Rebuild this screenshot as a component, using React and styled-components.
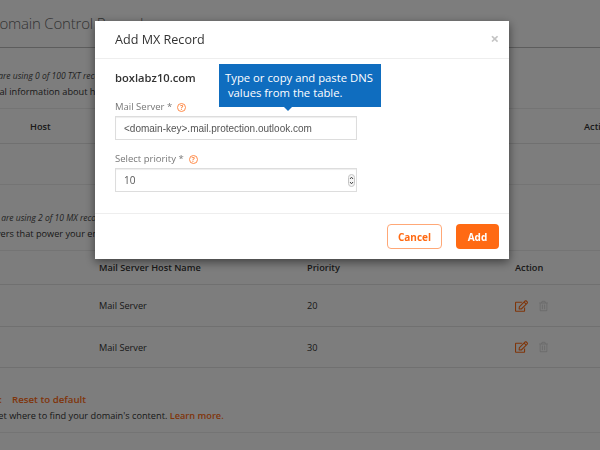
import React from 'react';
import styled, { createGlobalStyle } from 'styled-components';
import { FaRegEdit, FaRegTrashAlt } from 'react-icons/fa';

const GlobalStyle = createGlobalStyle`
  html, body {
    margin: 0;
    padding: 0;
    height: 100%;
    overflow: hidden;
    background: #fbfbfb;
    font-family: "Open Sans", "Noto Sans", sans-serif;
    color: #333;
  }
`;

const mxRows = [
    { host: 'Mail Server', priority: 20 },
    { host: 'Mail Server', priority: 30 },
];

const HelpIcon = () => <HelpMark>?</HelpMark>;

const App = () => {
    return (
        <>
            <GlobalStyle />
            <Page>
                <PageTitle>Domain Control Records</PageTitle>
                <Note $top={20}>You are using 0 of 100 TXT records</Note>
                <Info $shift={-9}>General information about how to use them</Info>
                <HeaderRow $height={34}>
                    <HostCell>Host</HostCell>
                    <ActionHead>Action</ActionHead>
                </HeaderRow>
                <EmptyRow />
                <Note $top={25} $shift={3}>You are using 2 of 10 MX records</Note>
                <Info>Servers that power your email</Info>
                <HeaderRow $height={33}>
                    <MxHost>Mail Server Host Name</MxHost>
                    <MxPriority>Priority</MxPriority>
                    <MxAction>Action</MxAction>
                </HeaderRow>
                {mxRows.map(row => (
                    <BodyRow key={row.priority}>
                        <MxHost>{row.host}</MxHost>
                        <MxPriority>{row.priority}</MxPriority>
                        <MxAction>
                            <EditIcon />
                            <TrashIcon />
                        </MxAction>
                    </BodyRow>
                ))}
                <ResetLine>
                    <ResetLabel>NS:</ResetLabel>
                    <ResetLink>Reset to default</ResetLink>
                </ResetLine>
                <Info $shift={-103}>
                    Name servers tell the internet where to find your domain's content. <LearnMore>Learn more.</LearnMore>
                </Info>
                <LastHeader>
                    <TypeCell>Type</TypeCell>
                    <ValueCell>Name</ValueCell>
                </LastHeader>
            </Page>
            <Overlay>
                <Modal>
                    <ModalHeader>
                        <ModalTitle>Add MX Record</ModalTitle>
                        <CloseButton>×</CloseButton>
                    </ModalHeader>
                    <ModalBody>
                        <DomainName>boxlabz10.com</DomainName>
                        <FieldLabel $top={15} $bottom={3}>Mail Server *<HelpIcon /></FieldLabel>
                        <TextInput readOnly value="<domain-key>.mail.protection.outlook.com" />
                        <FieldLabel $top={13} $bottom={3}>Select priority *<HelpIcon /></FieldLabel>
                        <NumberWrap>
                            <NumberValue>10</NumberValue>
                            <Spinner>
                                <svg width="7" height="13" viewBox="0 0 7 13">
                                    <rect x="0.5" y="0.5" width="6" height="12" rx="3" fill="#f4f4f4" stroke="#c4c4c4" />
                                    <path d="M2 5 L3.5 3.2 L5 5 M2 8 L3.5 9.8 L5 8" fill="none" stroke="#444" strokeWidth="1" />
                                </svg>
                            </Spinner>
                        </NumberWrap>
                        <Tooltip>
                            Type or copy and paste DNS<br />&nbsp;values from the table.
                        </Tooltip>
                    </ModalBody>
                    <ModalFooter>
                        <CancelButton>Cancel</CancelButton>
                        <AddButton>Add</AddButton>
                    </ModalFooter>
                </Modal>
            </Overlay>
        </>
    );
};

export default App;

const Page = styled.div`
  width: 618px;
  height: 450px;
  overflow: hidden;
  margin-left: -18px;
  font-size: 9.2px;
`;

const PageTitle = styled.h1`
  margin: 0 0 0 7px;
  height: 48px;
  padding-top: 13px;
  box-sizing: border-box;
  border-bottom: 1px solid #bbb;
  font-size: 15px;
  line-height: 20px;
  letter-spacing: -0.2px;
  font-weight: 300;
  color: #666;
  white-space: nowrap;
`;

const Note = styled.div`
  margin-top: ${p => p.$top}px;
  margin-left: ${p => p.$shift ?? 0}px;
  font-size: 8.5px;
  line-height: 16px;
  font-style: italic;
  color: #444;
`;

const Info = styled.div`
  margin-left: ${p => p.$shift ?? 0}px;
  font-size: 9.2px;
  line-height: 16px;
  color: #333;
  white-space: nowrap;
`;

const HeaderRow = styled.div`
  margin-top: 8px;
  height: ${p => p.$height}px;
  display: flex;
  align-items: center;
  border-top: 1px solid #e8e8e8;
  border-bottom: 1px solid #e0e0e0;
  font-weight: 600;
`;

const HostCell = styled.div`
  flex: none;
  margin-left: 48px;
  width: 554px;
`;

const ActionHead = styled.div`
  width: 40px;
  flex: none;
`;

const EmptyRow = styled.div`
  height: 40px;
  border-bottom: 1px solid #e8e8e8;
`;

const BodyRow = styled.div`
  height: 39.5px;
  padding-top: 1px;
  display: flex;
  align-items: center;
  border-bottom: 1px solid #e0e0e0;
`;

const MxHost = styled.div`
  margin-left: 117px;
  width: 208px;
`;

const MxPriority = styled.div`
  width: 208px;
`;

const MxAction = styled.div`
  display: flex;
  align-items: center;
  gap: 11px;
`;

const EditIcon = styled(FaRegEdit)`
  width: 13px;
  height: 12px;
  color: #ff6a13;
`;

const TrashIcon = styled(FaRegTrashAlt)`
  width: 9px;
  height: 12px;
  color: #d8d8d8;
`;

const ResetLine = styled.div`
  margin-top: 24px;
  display: flex;
  gap: 10px;
  font-size: 9.7px;
  line-height: 16px;
`;

const ResetLabel = styled.span`
  width: 20px;
  text-align: right;
  font-weight: 600;
  color: #ff6a13;
`;

const ResetLink = styled.span`
  color: #ff6a13;
  font-weight: 600;
`;

const LearnMore = styled.span`
  color: #ff6a13;
  font-weight: 600;
`;

const LastHeader = styled.div`
  margin-top: 8px;
  display: flex;
  border-top: 1px solid #e8e8e8;
  padding-top: 13px;
  font-weight: 600;
`;

const TypeCell = styled.div`
  margin-left: 186px;
  width: 279px;
`;

const ValueCell = styled.div``;

const Overlay = styled.div`
  position: fixed;
  inset: 0;
  background: rgba(0, 0, 0, 0.5);
  padding: 21px 0 0 95px;
`;

const Modal = styled.div`
  position: relative;
  width: 414px;
  height: 238px;
  display: flex;
  flex-direction: column;
  background: #fff;
  box-shadow: 0 3px 9px rgba(0, 0, 0, 0.5);
`;

const ModalHeader = styled.div`
  height: 35px;
  flex: none;
  display: flex;
  align-items: center;
  justify-content: space-between;
  padding: 0 10px 2px 20px;
  border-bottom: 1px solid #eee;
`;

const ModalTitle = styled.div`
  margin-top: 2px;
  font-size: 12.6px;
  color: #333;
`;

const CloseButton = styled.span`
  font-size: 15px;
  font-weight: 700;
  color: #c4c4c4;
  line-height: 1;
`;

const ModalBody = styled.div`
  flex: 1;
  padding: 10px 20px 0;
`;

const DomainName = styled.div`
  font-size: 11.2px;
  line-height: 17px;
  font-weight: 600;
  color: #333;
`;

const FieldLabel = styled.div`
  margin: ${p => p.$top}px 0 ${p => p.$bottom}px;
  display: flex;
  align-items: center;
  gap: 5px;
  font-size: 9.5px;
  line-height: 12px;
  color: #777;
`;

const HelpMark = styled.span`
  width: 7px;
  height: 7px;
  display: flex;
  align-items: center;
  justify-content: center;
  border: 1px solid #ff8c4a;
  border-radius: 50%;
  font-size: 7px;
  line-height: 7px;
  font-weight: 700;
  color: #ff8c4a;
`;

const TextInput = styled.input`
  display: block;
  width: 242px;
  height: 24px;
  box-sizing: border-box;
  padding: 0 8px;
  border: 1px solid #ddd;
  box-shadow: inset 0 1px 1px rgba(0, 0, 0, 0.07);
  outline: none;
  font-family: "Liberation Sans", Arial, sans-serif;
  font-size: 10px;
  color: #555;
`;

const NumberWrap = styled.div`
  width: 242px;
  height: 24px;
  box-sizing: border-box;
  display: flex;
  align-items: center;
  justify-content: space-between;
  padding: 0 1px 0 8px;
  border: 1px solid #ddd;
  box-shadow: inset 0 1px 1px rgba(0, 0, 0, 0.07);
`;

const NumberValue = styled.span`
  font-size: 10px;
  color: #555;
`;

const Spinner = styled.span`
  display: flex;
`;

const Tooltip = styled.div`
  position: absolute;
  left: 124px;
  top: 43px;
  width: 162px;
  height: 43px;
  box-sizing: border-box;
  padding: 7px 6px;
  background: #0f6dbf;
  color: #fff;
  font-size: 11.3px;
  line-height: 14.5px;
  white-space: nowrap;

  &::after {
    content: "";
    position: absolute;
    left: 65px;
    bottom: -4px;
    border-left: 4px solid transparent;
    border-right: 4px solid transparent;
    border-top: 4px solid #0f6dbf;
  }
`;

const ModalFooter = styled.div`
  height: 46px;
  flex: none;
  box-sizing: border-box;
  display: flex;
  align-items: center;
  justify-content: flex-end;
  gap: 14px;
  padding: 0 10px 0 0;
  border-top: 1px solid #eee;
`;

const CancelButton = styled.button`
  width: 55px;
  height: 25px;
  padding: 0;
  border: 1px solid #ffa877;
  border-radius: 4px;
  background: #fff;
  color: #ff6a13;
  font-family: inherit;
  font-size: 10px;
  font-weight: 700;
`;

const AddButton = styled.button`
  width: 43px;
  height: 25px;
  padding: 0;
  border: 0;
  border-radius: 4px;
  background: #ff6a13;
  color: #fff;
  font-family: inherit;
  font-size: 10px;
  font-weight: 700;
`;
